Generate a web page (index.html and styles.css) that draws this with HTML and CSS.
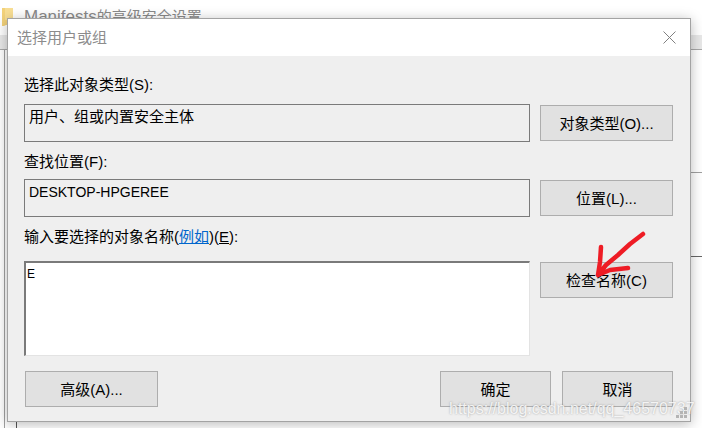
FILE: index.html
```html
<!DOCTYPE html>
<html lang="zh-CN">
	<head>
		<title>选择用户或组</title>
		<meta charset="utf-8">
		<link rel="stylesheet" href="styles.css">
	</head>
	<body>
		<!-- window behind the dialog -->
		<div class="back">
			<div class="back-title"><span class="back-latin">Manifests</span>的高级安全设置</div>
			<div class="back-band"></div>
			<svg class="folder" width="11" height="18" viewBox="0 0 11 18">
				<path d="M0 0H11V17H4L2 18H0Z" fill="#f3d27a"/>
				<path d="M3 0H11V12H3Z" fill="#f8de94"/>
			</svg>
			<div class="back-vline"></div>
			<div class="back-vline2"></div>
			<div class="back-hline1"></div>
			<div class="back-hline2"></div>
		</div>

		<div class="dialog">
			<div class="titlebar">
				<span class="title">选择用户或组</span>
				<svg class="close" width="13" height="13" viewBox="0 0 13 13">
					<path d="M0.5 0.5L12.5 12.5M12.5 0.5L0.5 12.5" stroke="#808080" stroke-width="1" fill="none"/>
				</svg>
			</div>
			<div class="content">
				<div class="label first">选择此对象类型(S):</div>
				<div class="row">
					<div class="field">用户、组或内置安全主体</div>
					<div class="btn side">对象类型(O)...</div>
				</div>
				<div class="label second">查找位置(F):</div>
				<div class="row">
					<div class="field latin">DESKTOP-HPGEREE</div>
					<div class="btn side">位置(L)...</div>
				</div>
				<div class="label third">输入要选择的对象名称(<a class="link" href="#">例如</a>)(<u>E</u>):</div>
				<div class="row">
					<div class="input">E</div>
					<div class="btn side">检查名称(C)</div>
				</div>
				<div class="footer">
					<div class="btn wide">高级(A)...</div>
					<div class="footer-right">
						<div class="btn small">确定</div>
						<div class="btn small">取消</div>
					</div>
				</div>
			</div>
		</div>

		<svg class="arrow" width="70" height="70" viewBox="0 0 70 70">
			<path d="M53 6L40 16L28 27L16 37L8 47M11 19L10 34L8 47L20 42L38 40" stroke="#ee1c25" stroke-width="4.5" stroke-linecap="round" stroke-linejoin="round" fill="none"/>
		</svg>
		<div class="watermark">https://blog.csdn.net/qq_46570737</div>
		<svg class="grip" width="12" height="12" viewBox="0 0 12 12" fill="#b4b4b4">
			<rect x="8" y="0" width="3" height="3"/>
			<rect x="4" y="4" width="3" height="3"/>
			<rect x="8" y="4" width="3" height="3"/>
			<rect x="0" y="8" width="3" height="3"/>
			<rect x="4" y="8" width="3" height="3"/>
			<rect x="8" y="8" width="3" height="3"/>
		</svg>
	</body>
</html>
```

FILE: styles.css
```css
html, body {
	margin: 0;
	width: 702px;
	height: 428px;
	overflow: hidden;
	background: #fff;
	font-family: "Liberation Sans", "Noto Sans CJK SC", sans-serif;
	font-size: 15px;
	color: #000;
}
.back-title {
	position: absolute;
	left: 24px;
	top: 6px;
	font-size: 15px;
	line-height: 22px;
	color: #8a8a8a;
	white-space: nowrap;
}
.back-latin {
	font-size: 17px;
}
.folder {
	position: absolute;
	left: 2px;
	top: 8px;
}
.back-band {
	position: absolute;
	left: 0;
	top: 35px;
	width: 702px;
	height: 14px;
	background: #e8e8e8;
	border-bottom: 1px solid #a8a8a8;
}
.back-vline {
	position: absolute;
	left: 4px;
	top: 50px;
	width: 1px;
	height: 378px;
	background: #a0a0a0;
}
.back-vline2 {
	position: absolute;
	left: 16px;
	top: 420px;
	width: 1px;
	height: 8px;
	background: #555;
}
.back-hline1 {
	position: absolute;
	left: 691px;
	top: 172px;
	width: 11px;
	height: 1px;
	background: #a0a0a0;
}
.back-hline2 {
	position: absolute;
	left: 691px;
	top: 256px;
	width: 11px;
	height: 1px;
	background: #666;
}
.dialog {
	position: absolute;
	left: 7px;
	top: 18px;
	width: 682px;
	height: 402px;
	border: 1px solid #a3a3a3;
	background: #efefef;
	box-shadow: 0 2px 12px rgba(0, 0, 0, 0.28);
	display: flex;
	flex-direction: column;
}
.titlebar {
	box-sizing: border-box;
	height: 37px;
	flex: none;
	background: #fff;
	display: flex;
	align-items: center;
	justify-content: space-between;
	padding: 0 14px 2px 9px;
}
.title {
	font-size: 15px;
	color: #8c8c8c;
}
.close {
	margin-top: 2px;
}
.content {
	padding: 0 17px 0 16px;
}
.label {
	height: 20px;
	line-height: 20px;
}
.first { margin-top: 19px; margin-bottom: 9px; }
.second { margin-top: 10px; margin-bottom: 7px; }
.third { margin-top: 10px; margin-bottom: 14px; }
.link { color: #0066cc; }
.row {
	display: flex;
	justify-content: space-between;
	align-items: flex-start;
}
.field {
	box-sizing: border-box;
	width: 506px;
	height: 38px;
	border: 1px solid #7a7a7a;
	padding: 0 4px;
	line-height: 24px;
}
.latin {
	font-size: 14px;
}
.input {
	box-sizing: border-box;
	width: 506px;
	height: 95px;
	background: #fff;
	border: 1px solid #e3e3e3;
	border-top: 2px solid #7a7a7a;
	border-left: 2px solid #7a7a7a;
	padding: 0 1px;
	font-size: 12px;
	line-height: 22px;
}
.btn {
	box-sizing: border-box;
	height: 36px;
	margin-top: 1px;
	padding-bottom: 1px;
	background: #e1e1e1;
	border: 1px solid #adadad;
	display: flex;
	align-items: center;
	justify-content: center;
}
.side { width: 133px; }
.footer {
	display: flex;
	justify-content: space-between;
	margin-top: 14px;
	padding-left: 1px;
}
.footer-right {
	display: flex;
	gap: 11px;
}
.wide { width: 133px; }
.small { width: 111px; }
.arrow {
	position: absolute;
	left: 590px;
	top: 228px;
}
.watermark {
	position: absolute;
	left: 449px;
	top: 400px;
	font-size: 16px;
	line-height: 18px;
	color: rgba(255, 255, 255, 0.85);
	text-shadow: 0 0 2px rgba(120, 120, 120, 0.7);
	white-space: nowrap;
}
.grip {
	position: absolute;
	left: 676px;
	top: 407px;
}
```
